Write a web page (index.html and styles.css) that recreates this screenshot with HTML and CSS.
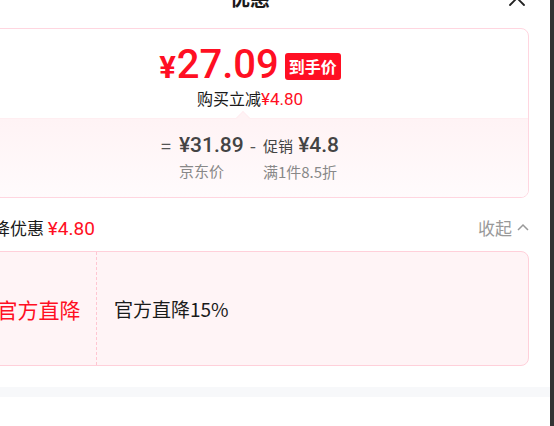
FILE: index.html
```html
<!DOCTYPE html>
<html lang="zh-CN">
<head>
<meta charset="utf-8">
<title>优惠</title>
<link rel="stylesheet" href="styles.css">
</head>
<body>
<div class="viewport">
  <div class="panel">
    <div class="header">
      <span class="title">优惠</span>
      <span class="close">
        <svg width="18" height="18" viewBox="0 0 18 18"><path d="M2 2L16 16M16 2L2 16" stroke="#222" stroke-width="1.8" fill="none" stroke-linecap="round"/></svg>
      </span>
    </div>

    <div class="price-card">
      <div class="price-top">
        <div class="price-row">
          <span class="yen">¥</span><span class="amount">27.09</span><span class="badge">到手价</span>
        </div>
        <div class="saving">购买立减<span class="red">¥4.80</span></div>
      </div>
      <div class="price-bottom">
        <span class="caret"></span>
        <div class="formula">
          <span class="op op-eq">=</span>
          <div class="term">
            <div class="term-value">¥31.89</div>
            <div class="term-label">京东价</div>
          </div>
          <span class="op op-minus">-</span>
          <div class="term">
            <div class="term-value"><span class="term-tag">促销</span> ¥4.8</div>
            <div class="term-label">满1件8.5折</div>
          </div>
        </div>
      </div>
    </div>

    <div class="summary">
      <div class="summary-text">直降优惠 <span class="red">¥4.80</span></div>
      <div class="collapse">收起
        <svg width="12" height="8" viewBox="0 0 12 8"><path d="M1 7L6 2L11 7" stroke="#999" stroke-width="1.5" fill="none"/></svg>
      </div>
    </div>

    <div class="promo-card">
      <div class="promo-type">官方直降</div>
      <div class="promo-desc">官方直降15%</div>
    </div>

    <div class="band"></div>
  </div>
  <div class="scrollbar"></div>
</div>
</body>
</html>
```
FILE: styles.css
```css
* { box-sizing: border-box; }
html, body {
  margin: 0;
  padding: 0;
  background: #fff;
  overflow: hidden;
}
body {
  font-family: "Noto Sans CJK SC", "Noto Sans", sans-serif;
  color: #1a1a1a;
}
.viewport {
  display: flex;
  width: 554px;
  height: 426px;
  overflow: hidden;
}
.panel {
  flex: none;
  width: 600px;
  margin-left: -50px;
  margin-top: -22px;
  display: flex;
  flex-direction: column;
}
.scrollbar {
  flex: none;
  width: 4px;
  height: 426px;
  background: #333;
}
.header {
  height: 40px;
  display: flex;
  align-items: center;
  justify-content: center;
  position: relative;
  margin-bottom: 10px;
}
.title {
  font-size: 20px;
  font-weight: 700;
  line-height: 24px;
  color: #1a1a1a;
  margin-top: -1px;
}
.close {
  position: absolute;
  right: 24px;
  top: 11px;
  display: flex;
}
.red { color: #ff0f23; }

.price-card {
  margin: 0 21px;
  border: 1px solid #ffd6e0;
  border-radius: 8px;
  overflow: hidden;
}
.price-top {
  display: flex;
  flex-direction: column;
  align-items: center;
  padding-top: 14px;
  height: 89px;
}
.price-row {
  display: flex;
  align-items: center;
  height: 44px;
  color: #ff0f23;
  font-family: Roboto, "Noto Sans", sans-serif;
}
.yen {
  font-size: 31px;
  font-weight: 700;
  line-height: 36px;
  margin-top: 6px;
  margin-right: 1px;
}
.amount {
  font-size: 40px;
  font-weight: 500;
  line-height: 44px;
}
.badge {
  margin-left: 6px;
  background: #ff0f23;
  color: #fff;
  font-family: "Noto Sans CJK SC", sans-serif;
  font-size: 16px;
  font-weight: 700;
  line-height: 27px;
  padding: 0 4px;
  border-radius: 3px;
  margin-top: 2px;
}
.saving {
  font-size: 16px;
  line-height: 22px;
  color: #1a1a1a;
}
.saving .red { font-family: Roboto, sans-serif; font-size: 17px; }

.price-bottom {
  position: relative;
  border-top: 1px solid #ffeef1;
  background: linear-gradient(#fff3f5, #fffbfc);
  height: 79px;
  padding-top: 13px;
  display: flex;
  justify-content: center;
}
.caret {
  position: absolute;
  top: -6px;
  left: 266px;
  width: 10px;
  height: 10px;
  background: #fff3f5;
  border-left: 1px solid #ffeef1;
  border-top: 1px solid #ffeef1;
  transform: rotate(45deg);
}
.formula {
  display: flex;
  align-items: flex-start;
  color: #4a4a4a;
}
.op {
  font-size: 18px;
  line-height: 26px;
  color: #555;
}
.op-eq { margin-right: 8px; }
.op-minus { margin: 0 7px 0 6px; }
.term {
  display: flex;
  flex-direction: column;
}
.term-value {
  font-family: Roboto, "Noto Sans CJK SC", sans-serif;
  font-size: 21px;
  font-weight: 500;
  line-height: 26px;
  color: #444;
}
.term-tag {
  font-family: "Noto Sans CJK SC", sans-serif;
  font-size: 15px;
  font-weight: 400;
  color: #444;
}
.term-label {
  margin-top: 4px;
  font-size: 15px;
  line-height: 18px;
  color: #888;
}

.summary {
  margin: 9px 21px 0 21px;
  height: 40px;
  display: flex;
  align-items: center;
  justify-content: space-between;
}
.summary-text {
  font-size: 17px;
  margin-left: 5px;
  color: #1a1a1a;
}
.summary-text .red { font-family: Roboto, sans-serif; font-size: 19px; }
.collapse {
  font-size: 17px;
  color: #999;
  display: flex;
  align-items: center;
  gap: 5px;
}

.promo-card {
  margin: 4px 21px 0 21px;
  height: 115px;
  border: 1px solid #ffd0da;
  border-radius: 8px;
  background: #fff4f6;
  display: flex;
  align-items: center;
}
.promo-type {
  width: 125px;
  height: 100%;
  display: flex;
  align-items: center;
  justify-content: center;
  font-size: 21px;
  color: #ff0f23;
  border-right: 1px dashed #ffc6d2;
  padding-left: 9px;
}
.promo-desc {
  padding-left: 17px;
  font-size: 19px;
  color: #1a1a1a;
}

.band {
  margin-top: 21px;
  height: 10px;
  background: #f7f8fa;
}
```
